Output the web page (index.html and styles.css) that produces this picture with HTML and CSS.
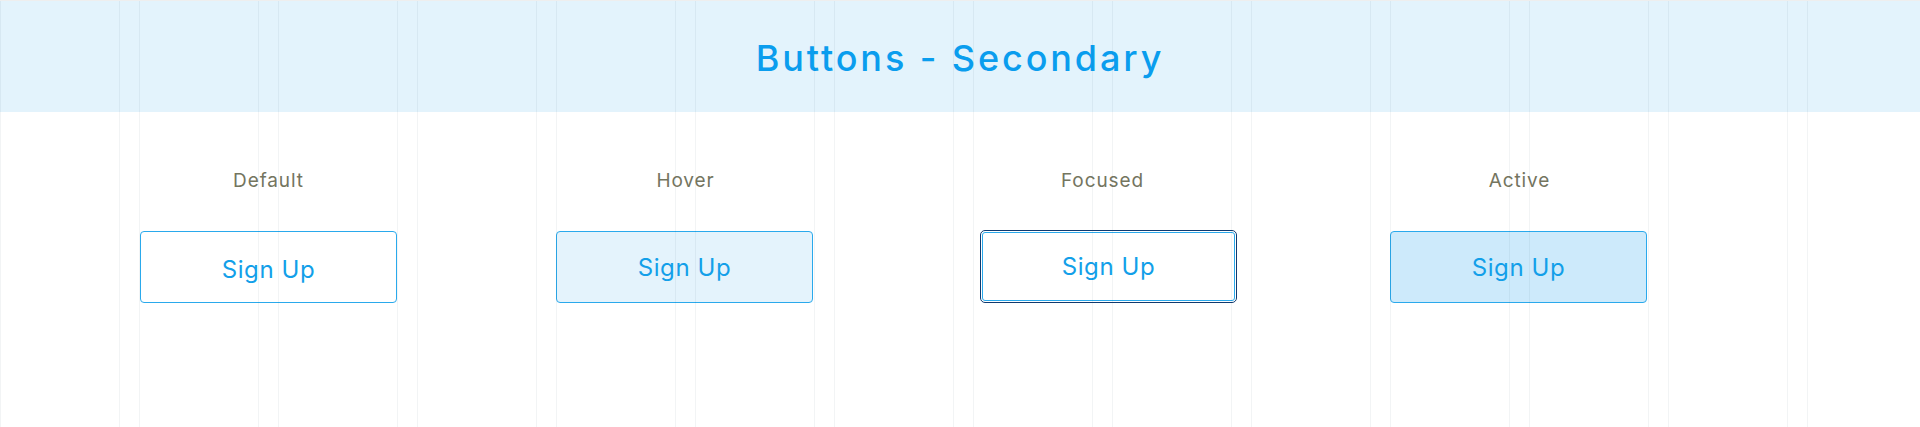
FILE: index.html
```html
<!DOCTYPE html>
<html lang="en">
<head>
<meta charset="utf-8">
<title>Buttons - Secondary</title>
<link rel="stylesheet" href="styles.css">
</head>
<body>
<div class="page">
  <header class="banner">
    <h1 class="banner-title">Buttons - Secondary</h1>
  </header>
  <main class="states">
    <section class="state state-1">
      <p class="state-label">Default</p>
      <button class="btn btn-default" type="button">Sign Up</button>
    </section>
    <section class="state state-2">
      <p class="state-label">Hover</p>
      <button class="btn btn-hover" type="button">Sign Up</button>
    </section>
    <section class="state state-3">
      <p class="state-label">Focused</p>
      <button class="btn btn-focused" type="button">Sign Up</button>
    </section>
    <section class="state state-4">
      <p class="state-label">Active</p>
      <button class="btn btn-active" type="button">Sign Up</button>
    </section>
  </main>
  <div class="grid-overlay" aria-hidden="true">
    <span class="col"></span><span class="col"></span><span class="col"></span><span class="col"></span>
    <span class="col"></span><span class="col"></span><span class="col"></span><span class="col"></span>
    <span class="col"></span><span class="col"></span><span class="col"></span><span class="col"></span>
    <span class="col"></span><span class="col"></span>
  </div>
</div>
</body>
</html>
```
FILE: styles.css
```css
* { box-sizing: border-box; }

html, body {
  margin: 0;
  padding: 0;
  background: #ffffff;
}

body {
  font-family: Inter, "Noto Sans", sans-serif;
  width: 1920px;
  height: 427px;
  overflow: hidden;
}

.page {
  position: relative;
  height: 427px;
  border-top: 1px solid #eeeeee;
}

.banner {
  height: 111px;
  background: #e3f3fc;
  display: flex;
  align-items: center;
  justify-content: center;
}

.banner-title {
  margin: 0;
  font-size: 36px;
  font-weight: 500;
  color: #0a9dee;
  letter-spacing: 2.9px;
  line-height: 1;
  padding-top: 2px;
}

.states {
  display: grid;
  grid-template-columns: repeat(14, 120px);
  column-gap: 19px;
  padding-top: 57px;
}

.state {
  display: flex;
  flex-direction: column;
  align-items: center;
}

.state-1 { grid-column: 2 / span 2; }
.state-2 { grid-column: 5 / span 2; }
.state-3 { grid-column: 8 / span 2; }
.state-4 { grid-column: 11 / span 2; }

.state-label {
  margin: 0;
  height: 24px;
  line-height: 24px;
  font-size: 19px;
  font-weight: 400;
  color: #74755f;
  letter-spacing: 0.9px;
}

.btn {
  margin-top: 38px;
  width: 257px;
  height: 72px;
  border: 1px solid #2aa9ec;
  border-radius: 4px;
  background: #ffffff;
  color: #139fe9;
  font-family: Inter, "Noto Sans", sans-serif;
  font-size: 24px;
  font-weight: 400;
  letter-spacing: 0.6px;
  padding: 0;
  display: flex;
  align-items: center;
  justify-content: center;
  align-self: flex-start;
}

.btn-default {
  margin-left: 1px;
  padding-top: 4px;
}

.btn-hover {
  background: #e4f3fc;
}

.btn-focused {
  width: 253px;
  height: 69px;
  margin-top: 39px;
  margin-left: 9px;
  border-radius: 3px;
  outline: 1px solid #0f3a70;
  outline-offset: 1px;
}

.btn-active {
  background: #cdeafb;
}

.grid-overlay {
  position: absolute;
  inset: 0;
  display: grid;
  grid-template-columns: repeat(14, 120px);
  column-gap: 19px;
  pointer-events: none;
}

.col {
  border-left: 1px solid rgba(40, 60, 80, 0.06);
  border-right: 1px solid rgba(40, 60, 80, 0.06);
}
```
